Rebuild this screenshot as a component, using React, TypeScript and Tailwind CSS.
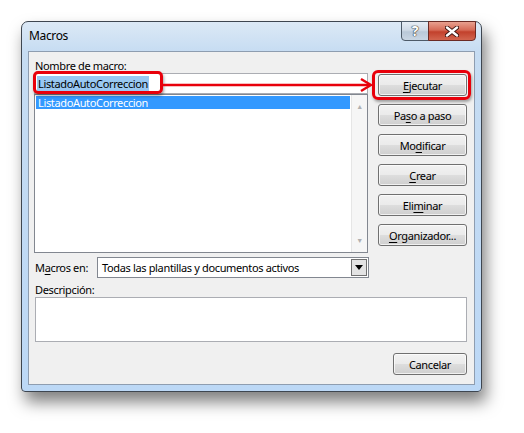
const btn =
  "h-[22px] rounded-[3px] border border-[#707070] bg-[linear-gradient(#f2f2f2_0%,#ebebeb_48%,#dddddd_52%,#cfcfcf_100%)] text-[11px] text-black flex items-center justify-center shadow-[inset_0_0_0_1px_rgba(255,255,255,0.7)]";

function Key({ children }: { children: string }) {
  return <span className="underline underline-offset-2">{children}</span>;
}

function TitleButtons() {
  return (
    <div className="ml-auto mr-[5px] -mt-px flex h-[20px]">
      <div className="flex w-[28px] items-center justify-center rounded-bl-[4px] border border-[#4d5a68] bg-[linear-gradient(#e6edf5_0%,#cfdae6_45%,#b9c8d8_55%,#c9d6e4_100%)]">
        <span className="text-[14px] font-bold leading-none text-white [text-shadow:0_0_1px_#333,0_0_1px_#333,0_0_1px_#333]">
          ?
        </span>
      </div>
      <div className="-ml-px flex w-[48px] items-center justify-center rounded-br-[4px] border border-[#6b2a24] bg-[linear-gradient(#e8a08f_0%,#d66a56_45%,#c2412c_55%,#d2654f_100%)]">
        <svg width="14" height="11" viewBox="0 0 14 11">
          <path d="M2 1.5 L12 9.5 M12 1.5 L2 9.5" stroke="#3a1410" strokeWidth="4.2" strokeLinecap="round" />
          <path d="M2 1.5 L12 9.5 M12 1.5 L2 9.5" stroke="#fff" strokeWidth="2.4" strokeLinecap="round" />
        </svg>
      </div>
    </div>
  );
}

export default function App() {
  return (
    <div className="relative h-[433px] w-[524px] overflow-hidden bg-white pl-[21px] pt-[21px] font-['Noto_Sans',sans-serif] text-[11px] leading-[15px] tracking-[-0.35px] text-black">
      <div className="flex w-[461px] flex-col rounded-t-[7px] rounded-b-[4px] border border-[#3e4650] bg-[linear-gradient(#dce9f6_0%,#c6dcf2_30px,#bcd8f6_100%)] shadow-[4px_10px_16px_rgba(0,0,0,0.5)]">
        <div className="flex h-[29px] items-start">
          <span className="pl-[7px] pt-[6px] text-[12px]">Macros</span>
          <TitleButtons />
        </div>

        <div className="mx-[6px] mb-[6px] flex flex-col border border-[#8e9db0] bg-[#f0f0f0] pl-[5px] pt-[6px] pb-[9px]">
          <div className="flex">
            <div className="flex w-[334px] flex-col">
              <div className="h-[15px] pl-px">
                <Key>N</Key>ombre de macro:
              </div>
              <div className="flex h-[21px] items-center border border-[#abadb3] bg-white pl-[2px]">
                <span className="bg-[#99c8f2] px-px">ListadoAutoCorreccion</span>
              </div>
              <div className="flex h-[159px] border border-[#828790] bg-white">
                <div className="flex-1 p-px">
                  <div className="h-[13px] bg-[#3399ff] pl-[2px] leading-[13px] text-white">
                    ListadoAutoCorreccion
                  </div>
                </div>
                <div className="flex w-[16px] flex-col items-center justify-between border-l border-[#e6e6e6] bg-[#f6f6f6] py-[8px] text-[7px] leading-none text-[#b0b0b0]">
                  <span>▲</span>
                  <span>▼</span>
                </div>
              </div>
            </div>

            <div className="ml-[10px] flex w-[89px] flex-col gap-[8px] pt-[16px]">
              <div className={btn + " border-[#3c7fb1] shadow-[inset_0_0_0_1px_#7fd0f5]"}>
                <Key>E</Key>jecutar
              </div>
              <div className={btn}>
                Pa<Key>s</Key>o a paso
              </div>
              <div className={btn}>
                Mo<Key>d</Key>ificar
              </div>
              <div className={btn}>
                <Key>C</Key>rear
              </div>
              <div className={btn}>
                Eli<Key>m</Key>inar
              </div>
              <div className={btn}>
                <Key>O</Key>rganizador...
              </div>
            </div>
          </div>

          <div className="mt-[4px] flex h-[21px] items-center">
            <span className="w-[63px] pl-px">
              M<Key>a</Key>cros en:
            </span>
            <div className="flex h-[21px] w-[272px] items-center border border-[#828790] bg-white">
              <span className="flex-1 pl-[4px]">Todas las plantillas y documentos activos</span>
              <div className="mr-px flex h-[17px] w-[16px] items-center justify-center border border-[#707070] bg-[#e3e3e3]">
                <svg width="8" height="5" viewBox="0 0 8 5">
                  <path d="M0 0 H8 L4 5 Z" fill="#000" />
                </svg>
              </div>
            </div>
          </div>

          <div className="mt-[5px] h-[14px] pl-px leading-[14px]">Descripción:</div>
          <div className="ml-px h-[45px] w-[432px] border border-[#abadb3] bg-white" />

          <div className="mt-[11px] flex w-[433px] justify-end">
            <div className={btn + " h-[21px] w-[74px]"}>Cancelar</div>
          </div>
        </div>
      </div>

      {/* red callouts drawn over the dialog */}
      <div className="absolute left-[33px] top-[71px] h-[23px] w-[130px] rounded-[5px] border-[3px] border-[#e8000b] shadow-[1px_2px_3px_rgba(0,0,0,0.35)]" />
      <div className="absolute left-[372px] top-[70px] h-[30px] w-[99px] rounded-[6px] border-[3px] border-[#e8000b] shadow-[1px_2px_3px_rgba(0,0,0,0.35)]" />
      <svg className="absolute left-[162px] top-[77px]" width="212" height="16" viewBox="0 0 212 16">
        <path d="M0 8 H208" stroke="#e8000b" strokeWidth="2.5" />
        <path d="M199 2 L209 8 L199 14" fill="none" stroke="#e8000b" strokeWidth="2.5" strokeLinejoin="round" />
      </svg>
    </div>
  );
}
